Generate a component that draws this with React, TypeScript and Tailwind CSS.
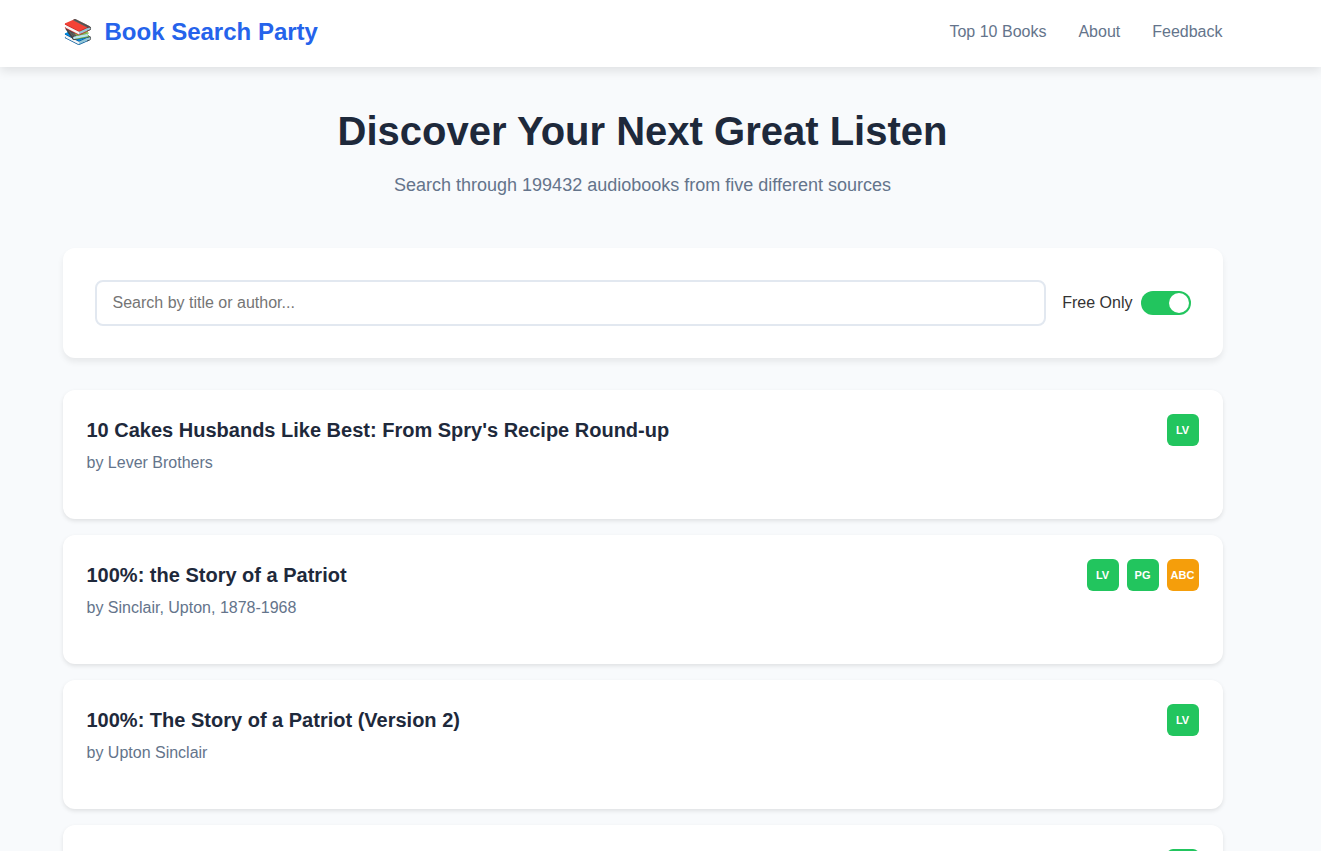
import React, { useState } from 'react';

interface Source {
  code: string;
  free: boolean;
}

interface Book {
  title: string;
  author: string;
  sources: Source[];
}

const librivox: Source = { code: 'LV', free: true };
const gutenberg: Source = { code: 'PG', free: true };
const audiobooksCom: Source = { code: 'ABC', free: false };

const books: Book[] = [
  { title: "10 Cakes Husbands Like Best: From Spry's Recipe Round-up", author: 'Lever Brothers', sources: [librivox] },
  { title: '100%: the Story of a Patriot', author: 'Sinclair, Upton, 1878-1968', sources: [librivox, gutenberg, audiobooksCom] },
  { title: '100%: The Story of a Patriot (Version 2)', author: 'Upton Sinclair', sources: [librivox] },
  { title: '1000 Mythological Characters Briefly Described', author: 'Edward S. Ellis', sources: [librivox] },
];

const navLinks = [
  { label: 'Top 10 Books', href: '#top' },
  { label: 'About', href: '#about' },
  { label: 'Feedback', href: '#feedback' },
];

const BookCard: React.FC<{ book: Book }> = ({ book }) => (
  <li className="flex min-h-[129px] items-start justify-between gap-4 rounded-xl bg-white p-6 shadow-[0_2px_4px_rgba(0,0,0,0.1)]">
    <div>
      <h2 className="mb-1 text-[20px] leading-8 font-bold text-[#1e293b]">{book.title}</h2>
      <p className="text-[16px] leading-[26px] text-[#64748b]">by {book.author}</p>
    </div>
    <div className="flex gap-2">
      {book.sources.map((source) => (
        <a
          key={source.code}
          href={`#${source.code}`}
          className={`flex size-8 items-center justify-center rounded-md text-[11px] font-bold text-white ${source.free ? 'bg-[#22c55e]' : 'bg-[#f59e0b]'}`}
        >
          {source.code}
        </a>
      ))}
    </div>
  </li>
);

const App: React.FC = () => {
  const [query, setQuery] = useState('');
  const [freeOnly, setFreeOnly] = useState(true);

  const visible = books.filter((b) =>
    `${b.title} ${b.author}`.toLowerCase().includes(query.toLowerCase())
  );

  return (
    <div className="min-h-screen bg-[#f8fafc] pb-8 font-['Liberation_Sans',Arial,sans-serif] text-[16px] text-[#333333]">
      {/* Header */}
      <header className="bg-white pr-9 pb-[3px] shadow-[0_4px_10px_rgba(0,0,0,0.1)]">
        <div className="mx-auto flex h-16 max-w-[1200px] items-center justify-between px-5">
          <a href="#home" className="flex items-center gap-3 text-[24px] font-bold text-[#2563eb]">
            <span aria-hidden="true">📚</span>
            <span>Book Search Party</span>
          </a>
          <nav className="flex gap-8">
            {navLinks.map((link) => (
              <a key={link.label} href={link.href} className="text-[#64748b] hover:text-[#2563eb]">
                {link.label}
              </a>
            ))}
          </nav>
        </div>
      </header>

      <main className="pr-9">
        <div className="mx-auto max-w-[1200px] px-5 pt-8">
          {/* Hero */}
          <div className="mb-12 text-center">
            <h1 className="mb-2 text-[40px] leading-[64px] font-bold text-[#1e293b]">Discover Your Next Great Listen</h1>
            <p className="text-[18px] leading-[29px] text-[#64748b]">Search through 199432 audiobooks from five different sources</p>
          </div>

          {/* Search */}
          <div className="mb-8 flex items-center gap-4 rounded-xl bg-white p-8 shadow-[0_4px_6px_rgba(0,0,0,0.07)]">
            <input
              type="text"
              aria-label="Search by title or author"
              value={query}
              onChange={(e) => setQuery(e.target.value)}
              placeholder="Search by title or author..."
              className="h-[46px] min-w-0 flex-1 rounded-lg border-2 border-[#e2e8f0] px-4 placeholder:text-[#757575] focus:border-[#2563eb] focus:outline-none"
            />
            <label className="flex cursor-pointer items-center gap-2">
              <span>Free Only</span>
              <input
                type="checkbox"
                checked={freeOnly}
                onChange={(e) => setFreeOnly(e.target.checked)}
                className="peer sr-only"
              />
              <span className="flex h-6 w-[50px] items-center rounded-full bg-[#cbd5e1] p-0.5 peer-checked:justify-end peer-checked:bg-[#22c55e]">
                <span className="size-5 rounded-full bg-white" />
              </span>
            </label>
          </div>

          {/* Results */}
          <ul className="flex flex-col gap-4">
            {visible.map((book) => (
              <BookCard key={book.title} book={book} />
            ))}
          </ul>
        </div>
      </main>
    </div>
  );
};

export default App;
